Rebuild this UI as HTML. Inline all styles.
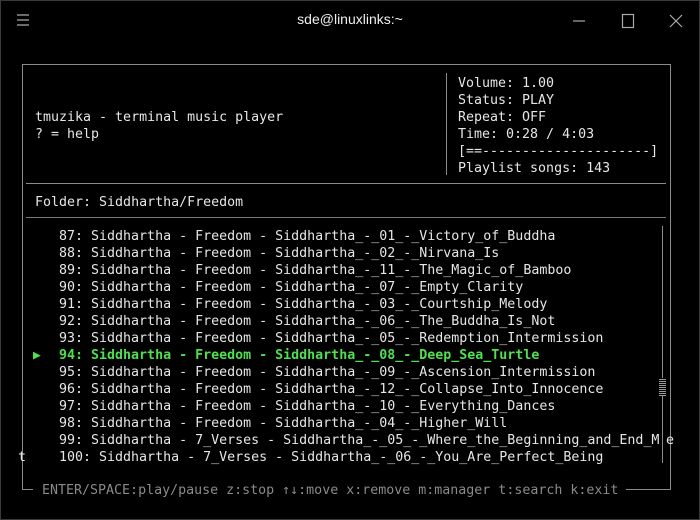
<!DOCTYPE html>
<html><head><meta charset="utf-8"><style>
*{margin:0;padding:0;box-sizing:border-box}
body{width:700px;height:520px;background:#000;position:relative;overflow:hidden;font-family:"DejaVu Sans Mono","Liberation Mono",monospace;font-size:13.3px;color:#e6e6e6}
.win{position:absolute;left:0;top:0;width:700px;height:520px;border:1px solid #3a3a3a}
.t{position:absolute;white-space:pre;line-height:17px}
.l{position:absolute;background:#8a8a8a}
.g{color:#4fe04f;font-weight:bold}
.title{position:absolute;top:11px;left:0;width:700px;text-align:center;font-family:"Liberation Sans",sans-serif;font-size:14px;color:#eee}
</style></head><body>
<div class="win"></div>
<div class="title">sde@linuxlinks:~</div>
<svg style="position:absolute;left:16px;top:13px" width="14" height="14"><path d="M1 2H13M1 7H13M1 12H13" stroke="#aaa" stroke-width="1.2"/></svg>
<svg style="position:absolute;left:570px;top:13px" width="120" height="16"><path d="M3 8H15" stroke="#aaa" stroke-width="1.2"/><rect x="52.5" y="1.5" width="11" height="13" fill="none" stroke="#aaa" stroke-width="1.2"/><path d="M100 2L112 14M112 2L100 14" stroke="#aaa" stroke-width="1.2"/></svg>

<div class="l" style="left:22px;top:64px;width:649px;height:1px"></div>
<div class="l" style="left:22px;top:64px;width:1px;height:426px"></div>
<div class="l" style="left:670px;top:64px;width:1px;height:426px"></div>
<div class="l" style="left:22px;top:489px;width:11px;height:1px"></div>
<div class="l" style="left:626px;top:489px;width:45px;height:1px"></div>
<div class="l" style="left:446px;top:73px;width:1px;height:102px"></div>
<div class="l" style="left:26px;top:183px;width:640px;height:1px"></div>
<div class="l" style="left:26px;top:217px;width:640px;height:1px;background:#777"></div>
<div class="l" style="left:662px;top:226px;width:1px;height:237px"></div>
<div style="position:absolute;left:659px;top:378px;width:7px;height:18px;background:repeating-linear-gradient(0deg,#999 0 1px,#000 1px 2px)"></div>

<div class="t" style="left:458px;top:75px">Volume: 1.00
Status: PLAY
Repeat: OFF
Time: 0:28 / 4:03
[==---------------------]
Playlist songs: 143</div>
<div class="t" style="left:35px;top:109px">tmuzika - terminal music player
? = help</div>
<div class="t" style="left:35px;top:194px">Folder: Siddhartha/Freedom</div>
<div class="t" style="left:59px;top:228px">87: Siddhartha - Freedom - Siddhartha_-_01_-_Victory_of_Buddha
88: Siddhartha - Freedom - Siddhartha_-_02_-_Nirvana_Is
89: Siddhartha - Freedom - Siddhartha_-_11_-_The_Magic_of_Bamboo
90: Siddhartha - Freedom - Siddhartha_-_07_-_Empty_Clarity
91: Siddhartha - Freedom - Siddhartha_-_03_-_Courtship_Melody
92: Siddhartha - Freedom - Siddhartha_-_06_-_The_Buddha_Is_Not
93: Siddhartha - Freedom - Siddhartha_-_05_-_Redemption_Intermission
<span class="g">94: Siddhartha - Freedom - Siddhartha_-_08_-_Deep_Sea_Turtle</span>
95: Siddhartha - Freedom - Siddhartha_-_09_-_Ascension_Intermission
96: Siddhartha - Freedom - Siddhartha_-_12_-_Collapse_Into_Innocence
97: Siddhartha - Freedom - Siddhartha_-_10_-_Everything_Dances
98: Siddhartha - Freedom - Siddhartha_-_04_-_Higher_Will
99: Siddhartha - 7_Verses - Siddhartha_-_05_-_Where_the_Beginning_and_End_M
100: Siddhartha - 7_Verses - Siddhartha_-_06_-_You_Are_Perfect_Being</div>
<div class="t g" style="left:33px;top:347px;font-size:13px">▶</div>
<div class="t" style="left:666px;top:432px">e</div>
<div class="t" style="left:18px;top:449px">t</div>
<div class="t" style="left:42px;top:482px;color:#8a8a8a">ENTER/SPACE:play/pause z:stop ↑↓:move x:remove m:manager t:search k:exit</div>
</body></html>
